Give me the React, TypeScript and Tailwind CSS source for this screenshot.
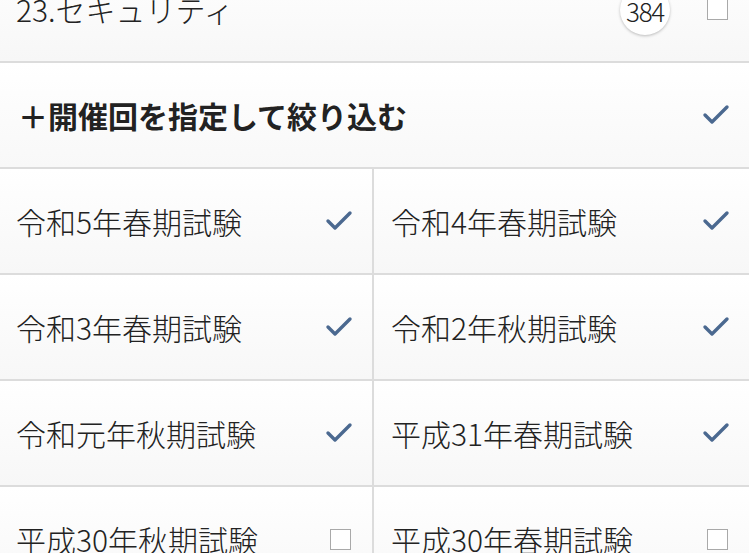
import React from 'react';

const exams = [
  { label: '令和5年春期試験', checked: true },
  { label: '令和4年春期試験', checked: true },
  { label: '令和3年春期試験', checked: true },
  { label: '令和2年秋期試験', checked: true },
  { label: '令和元年秋期試験', checked: true },
  { label: '平成31年春期試験', checked: true },
  { label: '平成30年秋期試験', checked: false },
  { label: '平成30年春期試験', checked: false },
];

const Check = () => (
  <svg width="28" height="22" viewBox="0 0 28 22" fill="none">
    <path d="M3 11 L10 18 L25 3" stroke="#4b6990" strokeWidth="3.4" strokeLinecap="round" strokeLinejoin="round" />
  </svg>
);

const Box = () => <div className="w-[21px] h-[21px] border-[1.5px] border-[#a9a9a9] bg-white" />;

export default function App() {
  return (
    <div
      className="w-[749px] h-[553px] overflow-hidden bg-white text-[#222]"
      style={{ fontFamily: '"Noto Sans CJK JP", "Noto Sans", sans-serif' }}
    >
      <div className="-mt-[43px]">
        {/* previous category row */}
        <div className="h-[106px] flex items-center pl-[16px] pr-[21px] bg-gradient-to-b from-white to-[#f7f7f7] border-b-2 border-[#dcdcdc]">
          <span className="flex-1 text-[30px] font-light leading-none">23.セキュリティ</span>
          <div className="w-[50px] h-[50px] mt-[2px] rounded-full bg-white shadow-[0_1px_3px_rgba(0,0,0,0.25)] flex items-center justify-center text-[26px] font-light tracking-tighter mr-[37px]">
            384
          </div>
          <Box />
        </div>

        {/* filter header */}
        <div className="h-[106px] flex items-center pl-[18px] pr-[19px] bg-gradient-to-b from-white to-[#f8f8f8] border-b-2 border-[#dcdcdc]">
          <span className="flex-1 text-[30px] font-bold leading-none">＋開催回を指定して絞り込む</span>
          <Check />
        </div>

        {/* exam grid */}
        <div className="grid grid-cols-[372px_1fr]">
          {exams.map((e, i) => (
            <div
              key={e.label}
              className={
                'h-[106px] flex items-center justify-between bg-gradient-to-b from-white to-[#f7f7f7] border-b-2 border-[#dcdcdc] ' +
                (i % 2 === 0 ? 'pl-[16px] pr-[19px]' : 'pl-[17px] pr-[19px] border-l-2')
              }
            >
              <span className="text-[30px] font-light leading-none">{e.label}</span>
              {e.checked ? <Check /> : <div className="mr-[2px]"><Box /></div>}
            </div>
          ))}
        </div>
      </div>
    </div>
  );
}
